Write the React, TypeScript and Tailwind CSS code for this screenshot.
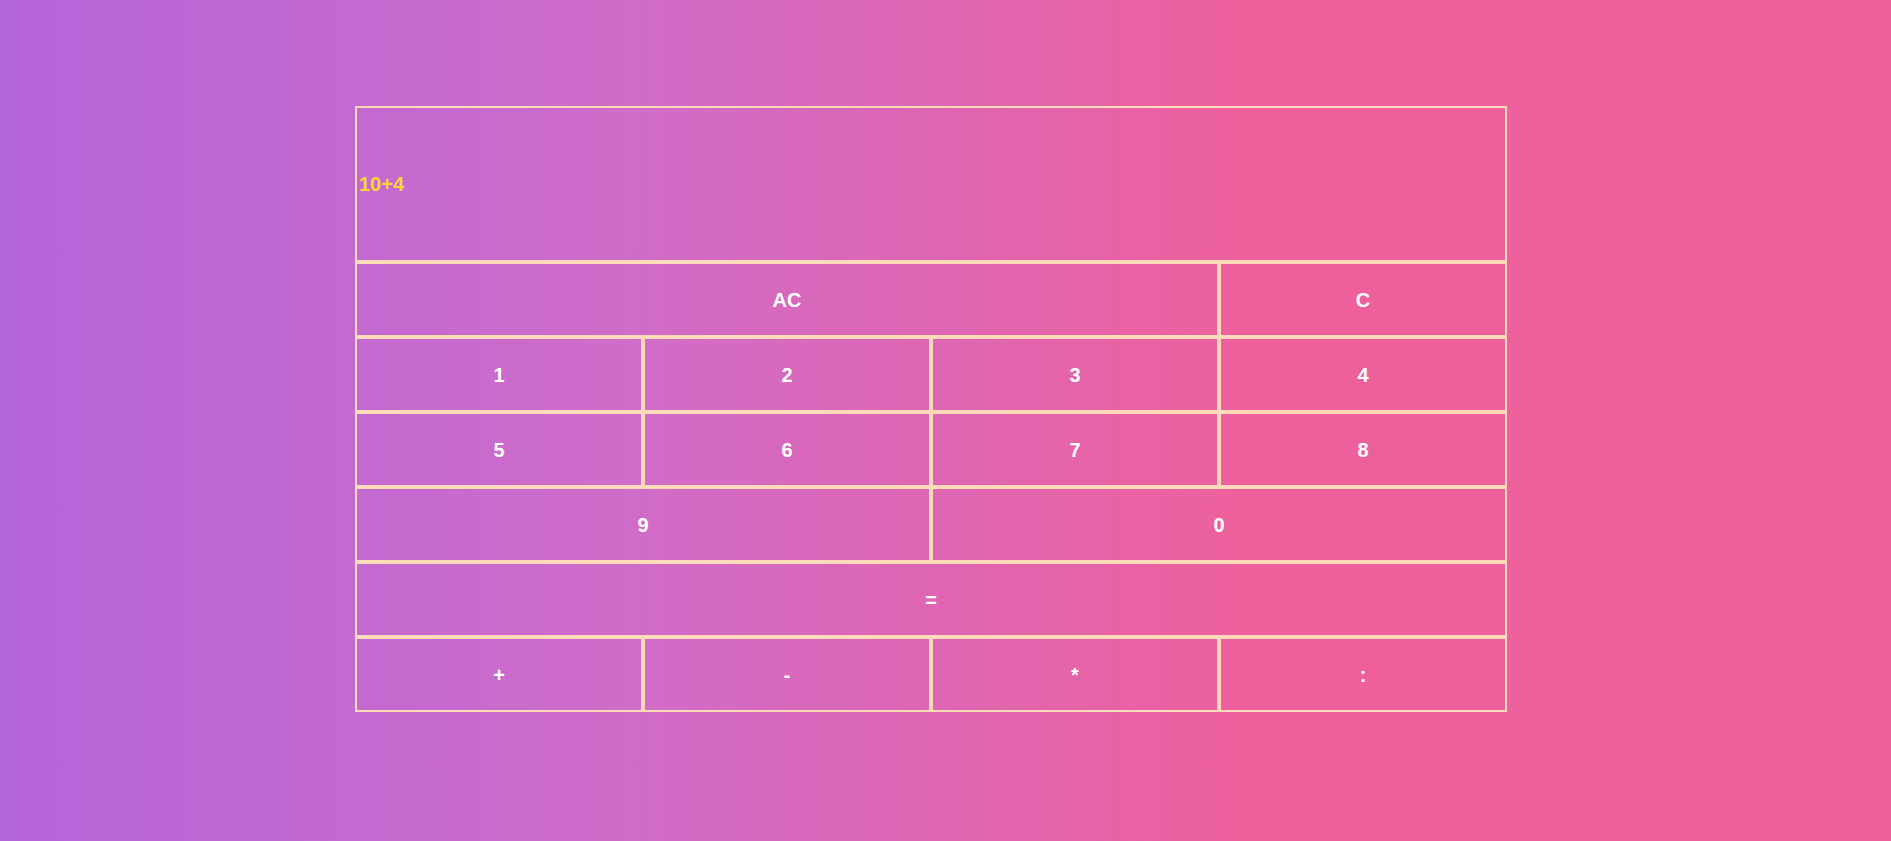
import React from "react";

const cell =
  "border-2 border-[#ffdab9] flex items-center justify-center text-white font-bold text-[20px] h-[75px]";

export default function App() {
  const keys: { label: string; span?: string }[] = [
    { label: "AC", span: "col-span-3" },
    { label: "C" },
    { label: "1" },
    { label: "2" },
    { label: "3" },
    { label: "4" },
    { label: "5" },
    { label: "6" },
    { label: "7" },
    { label: "8" },
    { label: "9", span: "col-span-2" },
    { label: "0", span: "col-span-2" },
    { label: "=", span: "col-span-4" },
    { label: "+" },
    { label: "-" },
    { label: "*" },
    { label: ":" },
  ];
  return (
    <div
      className="w-full h-[841px] bg-[linear-gradient(to_right,#b465da_0%,#cf6cc9_33%,#ee609c_66%,#ee609c_100%)] pl-[355px] pt-[106px]"
      style={{ fontFamily: '"Liberation Sans", Arial, sans-serif' }}
    >
      <div className="grid grid-cols-[repeat(4,288px)] w-[1152px]">
        <div className="col-span-4 h-[156px] border-2 border-[#ffdab9] flex items-center pl-[2px] text-[#fdd835] font-bold text-[20px]">
          10+4
        </div>
        {keys.map((k, i) => (
          <div key={i} className={`${cell} ${k.span ?? ""}`}>
            {k.label}
          </div>
        ))}
      </div>
    </div>
  );
}
